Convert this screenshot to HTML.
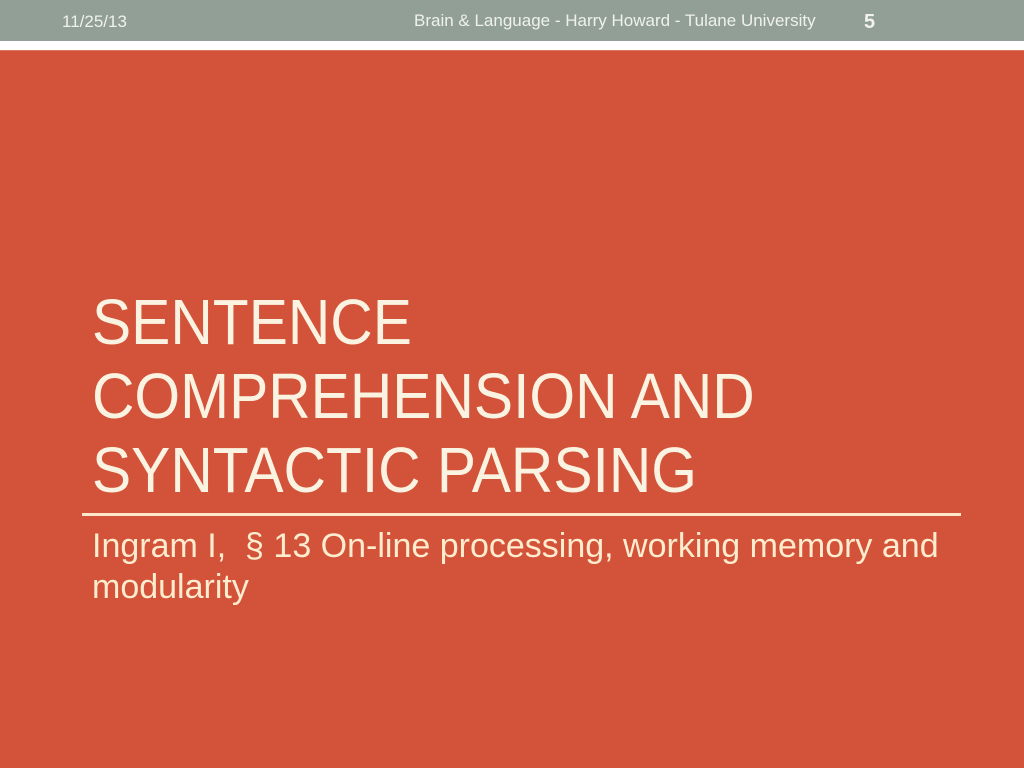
<!DOCTYPE html>
<html>
<head>
<meta charset="utf-8">
<style>
html,body{margin:0;padding:0;width:1024px;height:768px;overflow:hidden;background:#d3523a;}
body{position:relative;font-family:"Liberation Sans",Arial,sans-serif;}
div{position:absolute;white-space:nowrap;}
#top{left:0;top:0;width:1024px;height:41px;background:#919f97;}
#white{left:0;top:41px;width:1024px;height:9px;background:#fff;}
#edge{left:0;top:50px;width:1024px;height:1px;background:#dc7561;}
.h{color:#f0f1ec;font-size:17px;line-height:20px;}
#date{left:62px;top:12px;}
#foot{left:414px;top:11px;}
#num{left:864px;top:11px;font-size:20px;line-height:22px;font-weight:bold;color:#f3f3ee;}
.t{left:92px;color:#fbf3e1;font-size:64px;line-height:72px;transform:scaleX(.918);transform-origin:0 0;}
.s{left:92px;color:#fdeccd;font-size:34px;line-height:41px;}
#rule{left:82px;top:513px;width:879px;height:3px;background:#fde8cc;}
</style>
</head>
<body>
<div id="top"></div>
<div id="white"></div>
<div id="edge"></div>
<div id="date" class="h">11/25/13</div>
<div id="foot" class="h">Brain &amp; Language - Harry Howard - Tulane University</div>
<div id="num">5</div>
<div class="t" style="top:286px">SENTENCE</div>
<div class="t" style="top:360px">COMPREHENSION AND</div>
<div class="t" style="top:434px">SYNTACTIC PARSING</div>
<div id="rule"></div>
<div class="s" style="top:526px">Ingram I,&nbsp; § 13 On-line processing, working memory and</div>
<div class="s" style="top:567px">modularity</div>
</body>
</html>
